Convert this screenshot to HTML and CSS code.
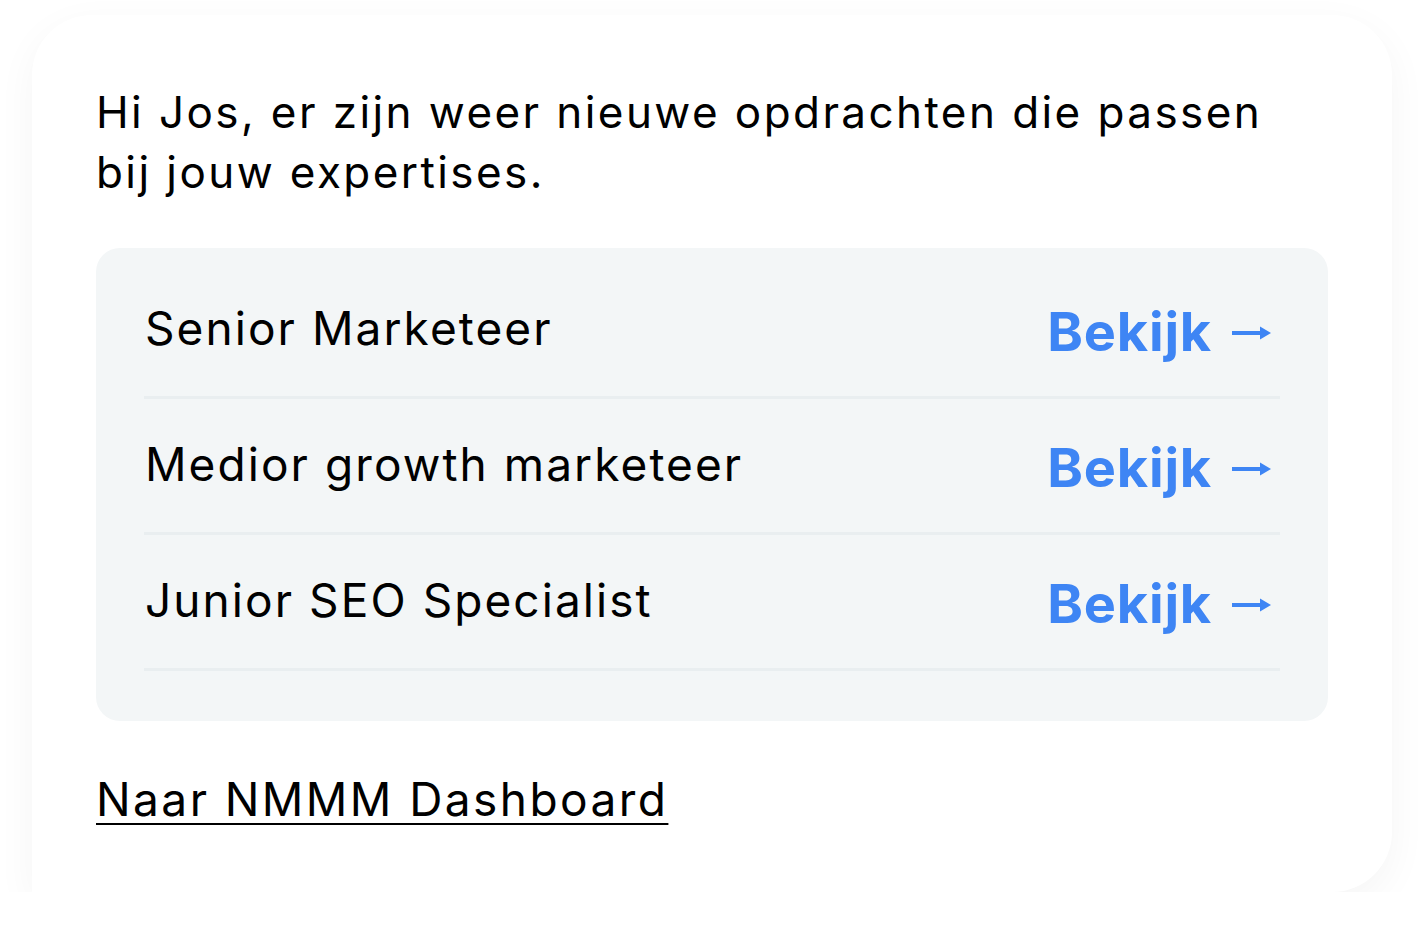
FILE: index.html
```html
<!DOCTYPE html>
<html lang="nl">
<head>
<meta charset="utf-8">
<title>Nieuwe opdrachten</title>
<link rel="stylesheet" href="styles.css">
</head>
<body>
<div class="page">
  <div class="card">
    <p class="intro">Hi Jos, er zijn weer nieuwe opdrachten die passen bij jouw expertises.</p>
    <div class="jobs">
      <div class="job">
        <span class="job-title">Senior Marketeer</span>
        <a class="job-link" href="#">Bekijk<svg class="arrow" width="40" height="16" viewBox="0 0 40 16" aria-hidden="true"><path d="M0 8 H30" stroke="currentColor" stroke-width="4"/><path d="M28 1.5 L39 8 L28 14.5 Z" fill="currentColor"/></svg></a>
      </div>
      <div class="job">
        <span class="job-title">Medior growth marketeer</span>
        <a class="job-link" href="#">Bekijk<svg class="arrow" width="40" height="16" viewBox="0 0 40 16" aria-hidden="true"><path d="M0 8 H30" stroke="currentColor" stroke-width="4"/><path d="M28 1.5 L39 8 L28 14.5 Z" fill="currentColor"/></svg></a>
      </div>
      <div class="job">
        <span class="job-title">Junior SEO Specialist</span>
        <a class="job-link" href="#">Bekijk<svg class="arrow" width="40" height="16" viewBox="0 0 40 16" aria-hidden="true"><path d="M0 8 H30" stroke="currentColor" stroke-width="4"/><path d="M28 1.5 L39 8 L28 14.5 Z" fill="currentColor"/></svg></a>
      </div>
    </div>
    <a class="dashboard" href="#">Naar NMMM Dashboard</a>
  </div>
</div>
</body>
</html>
```

FILE: styles.css
```css
html, body {
  margin: 0;
  padding: 0;
  background: #ffffff;
}

body {
  font-family: Inter, "Liberation Sans", sans-serif;
  color: #000000;
}

.page {
  padding: 15px 32px 0 32px;
  width: 1360px;
}

.card {
  box-sizing: border-box;
  width: 1360px;
  height: 877px;
  background: #ffffff;
  border-radius: 60px 60px 60px 0;
  box-shadow: 0 12px 40px rgba(0, 0, 0, 0.045);
  padding: 67px 64px 0 64px;
  display: flex;
  flex-direction: column;
  align-items: flex-start;
}

.intro {
  margin: 0;
  font-size: 44px;
  line-height: 60px;
  letter-spacing: 0.055em;
  max-width: 1200px;
}

.jobs {
  box-sizing: border-box;
  margin-top: 46px;
  width: 1232px;
  background: #f3f6f7;
  border-radius: 24px;
  padding: 15px 48px 50px 48px;
}

.job {
  display: flex;
  align-items: center;
  justify-content: space-between;
  height: 133px;
  border-bottom: 3px solid #e9eef0;
}

.job-title {
  font-size: 46px;
  letter-spacing: 0.045em;
  padding-left: 1px;
  padding-bottom: 4px;
}

.job-link {
  display: flex;
  align-items: center;
  gap: 20px;
  color: #3e85f4;
  text-decoration: none;
  font-weight: 700;
  font-size: 54px;
  letter-spacing: 0.015em;
  padding-right: 8px;
  padding-top: 4px;
}

.arrow {
  display: block;
  margin-top: 2px;
}

.dashboard {
  margin-top: 50px;
  font-size: 46px;
  color: #000000;
  letter-spacing: 0.053em;
  text-decoration: underline;
  text-decoration-thickness: 2px;
  text-underline-offset: 7px;
}
```
